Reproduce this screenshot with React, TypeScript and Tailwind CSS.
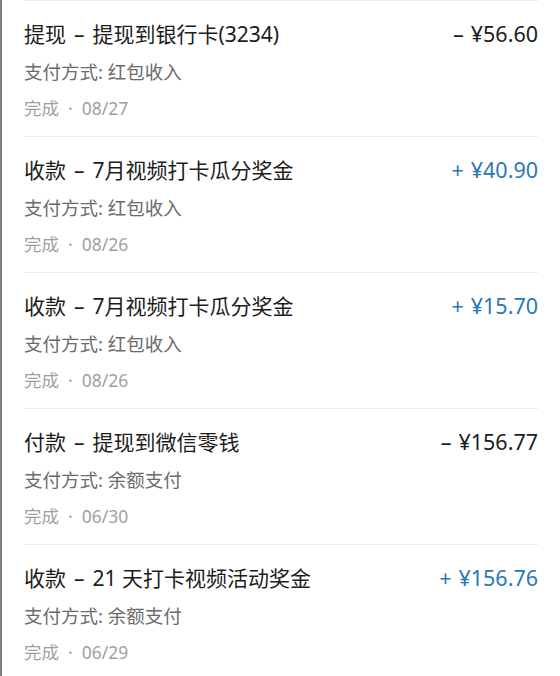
import React from 'react';

type Record = {
  kind: string;
  desc: string;
  method: string;
  date: string;
  amount: string;
  income: boolean;
};

const records: Record[] = [
  { kind: '提现', desc: '提现到银行卡(3234)', method: '支付方式: 红包收入', date: '08/27', amount: '¥56.60', income: false },
  { kind: '收款', desc: '7月视频打卡瓜分奖金', method: '支付方式: 红包收入', date: '08/26', amount: '¥40.90', income: true },
  { kind: '收款', desc: '7月视频打卡瓜分奖金', method: '支付方式: 红包收入', date: '08/26', amount: '¥15.70', income: true },
  { kind: '付款', desc: '提现到微信零钱', method: '支付方式: 余额支付', date: '06/30', amount: '¥156.77', income: false },
  { kind: '收款', desc: '21 天打卡视频活动奖金', method: '支付方式: 余额支付', date: '06/29', amount: '¥156.76', income: true },
];

export default function App() {
  return (
    <div
      className="w-[560px] h-[676px] bg-white border-l-2 border-[#808080] overflow-hidden"
      style={{ fontFamily: '"Noto Sans", "Noto Sans CJK SC", sans-serif' }}
    >
      <div className="ml-[22px] mr-[22px]">
        {records.map((r, i) => (
          <div key={i} className="border-t border-[#ececec] pt-[19px] pb-[16px]">
            <div className="flex justify-between items-center">
              <span className="text-[21px] leading-[28px] text-[#1c1c1c]">
                {r.kind}
                <span className="mx-[8px]">–</span>
                {r.desc}
              </span>
              <span
                className={
                  r.income
                    ? 'text-[21.5px] leading-[28px] text-[#2a78b4]'
                    : 'text-[21.5px] leading-[28px] text-[#1c1c1c]'
                }
              >
                <span className="mr-[7px]">{r.income ? '+' : '–'}</span>
                {r.amount}
              </span>
            </div>
            <div className="mt-[12px] text-[18.5px] leading-[24px] text-[#6b6b6b]">{r.method}</div>
            <div className="mt-[12px] text-[17.5px] leading-[24px] text-[#a0a0a0]">
              完成
              <span className="mx-[9px]">·</span>
              {r.date}
            </div>
          </div>
        ))}
      </div>
    </div>
  );
}
